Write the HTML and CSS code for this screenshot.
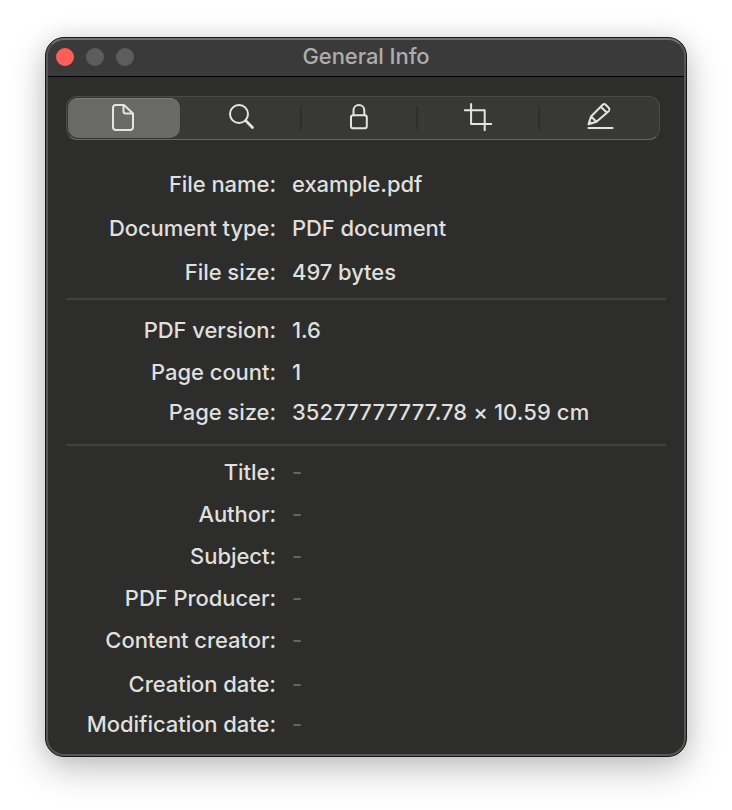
FILE: index.html
```html
<!DOCTYPE html>
<html lang="en">
<head>
<meta charset="utf-8">
<title>General Info</title>
<link rel="stylesheet" href="styles.css">
</head>
<body>
<main class="window">
  <header class="titlebar">
    <div class="lights"><span class="light close"></span><span class="light"></span><span class="light"></span></div>
    <h1 class="title">General Info</h1>
  </header>
  <nav class="tabs">
    <button class="tab selected" aria-label="General"><svg width="28" height="32" viewBox="0 0 28 32"><path d="M7 3h8l9 8.500V25a3 3 0 0 1-3 3H7a3 3 0 0 1-3-3V6a3 3 0 0 1 3-3zM14.500 3.500v6a2 2 0 0 0 2 2h7"/></svg></button>
    <button class="tab search" aria-label="Search"><svg width="32" height="32" viewBox="0 0 32 32"><circle cx="14" cy="12" r="9"/><path class="thick" d="M20.800 18.800l6.700 6.700"/></svg></button>
    <button class="tab lock" aria-label="Security"><svg width="28" height="32" viewBox="0 0 28 32"><rect x="6" y="13.300" width="15.800" height="13" rx="2"/><path d="M8.500 13.300V8.500C8.500 1.200 19.300 1.200 19.300 8.500V13.300"/></svg></button>
    <button class="tab crop" aria-label="Crop"><svg width="32" height="32" viewBox="0 0 32 32"><path d="M2.800 8.300H22.700V28.300M9.100 1.900V22H29.200"/></svg></button>
    <button class="tab edit" aria-label="Annotate"><svg width="32" height="32" viewBox="0 0 32 32"><path d="M6.500 22.200L9 14.500 20.700 2.700q1.500-1.300 3 .1l3.200 3.200q1.300 1.500 0 3L14.500 19.700zM9 14.500l5.500 5.200M18.800 4.800l5.700 5.500M7.300 19.500l2.200 1.900"/><path class="underline" d="M6.500 26h24"/></svg></button>
  </nav>
  <dl class="info first">
    <div class="row"><dt>File name:</dt><dd>example.pdf</dd></div>
    <div class="row"><dt>Document type:</dt><dd>PDF document</dd></div>
    <div class="row"><dt>File size:</dt><dd>497 bytes</dd></div>
  </dl>
  <dl class="info second">
    <div class="row"><dt>PDF version:</dt><dd>1.6</dd></div>
    <div class="row"><dt>Page count:</dt><dd>1</dd></div>
    <div class="row tight"><dt>Page size:</dt><dd class="dimensions">35277777777.78 × 10.59 cm</dd></div>
  </dl>
  <dl class="info third">
    <div class="row"><dt>Title:</dt><dd class="empty">-</dd></div>
    <div class="row"><dt>Author:</dt><dd class="empty">-</dd></div>
    <div class="row"><dt>Subject:</dt><dd class="empty">-</dd></div>
    <div class="row"><dt>PDF Producer:</dt><dd class="empty">-</dd></div>
    <div class="row"><dt>Content creator:</dt><dd class="empty">-</dd></div>
    <div class="row loose"><dt>Creation date:</dt><dd class="empty">-</dd></div>
    <div class="row tight"><dt>Modification date:</dt><dd class="empty">-</dd></div>
  </dl>
</main>
</body>
</html>
```
FILE: styles.css
```css
* { box-sizing: border-box; }
body {
  margin: 0;
  padding: 37px 45px 53px;
  background: #fff;
  font-family: Inter, "Liberation Sans", sans-serif;
  overflow: hidden;
}
.window {
  width: 642px;
  height: 720px;
  border: 1px solid #171717;
  border-radius: 19px;
  background: #2d2d2b;
  overflow: hidden;
  position: relative;
  box-shadow: 0 12px 36px rgba(0, 0, 0, .24), 0 0 22px rgba(0, 0, 0, .08);
}
.window::after {
  content: "";
  position: absolute;
  inset: 0;
  border: 2px solid #575756;
  border-top-color: #707070;
  border-radius: 18px;
  pointer-events: none;
}
.titlebar {
  display: grid;
  grid-template-columns: 90px 1fr 90px;
  align-items: center;
  height: 39px;
  background: #3a3a3a;
  border-bottom: 1px solid #000;
}
.lights { display: flex; gap: 12px; padding-left: 10px; }
.light { width: 18px; height: 18px; border-radius: 50%; background: #5d5d5d; }
.close { background: #ff5f57; }
.title {
  margin: 0;
  padding-bottom: 2px;
  text-align: center;
  font-size: 22px;
  line-height: 36px;
  font-weight: 500;
  letter-spacing: -.08px;
  color: #adadad;
}
.tabs {
  display: grid;
  grid-template-columns: 114px 120px 116px 122px 118px;
  width: 594px;
  height: 44px;
  margin: 19px 0 0 20px;
  border: 1px solid #4a4a49;
  border-bottom: 1px solid #666665;
  border-radius: 11px;
  background: #383836;
}
.tab {
  position: relative;
  display: flex;
  align-items: center;
  justify-content: center;
  padding: 0;
  border: 0;
  background: none;
  color: #e4e4e3;
}
.tab.selected {
  width: 112px;
  height: 40px;
  margin: 1px;
  border-radius: 10px;
  background: #696968;
  box-shadow: inset 0 1px #7c7c7b, 0 0 1px #222;
}
.tab + .tab + .tab::before {
  content: "";
  position: absolute;
  left: -1px;
  top: 9px;
  width: 2px;
  height: 24px;
  background: #2e2e2d;
}
.tab svg { fill: none; stroke: currentColor; stroke-width: 2; stroke-linecap: round; stroke-linejoin: round; display: block; }
.tab .thick { stroke-width: 2.8; }
.tab .underline { stroke-width: 2.2; }
.tab.selected svg { margin-left: -2px; }
.info { margin: 0 20px; }
.first { padding: 24px 0 6px; border-bottom: 2px solid #424241; }
.second { padding: 10px 0 12px; border-bottom: 2px solid #424241; }
.third { padding-top: 6px; }
.row {
  display: grid;
  grid-template-columns: 210px 1fr;
  column-gap: 16px;
  height: 40px;
  line-height: 40px;
  font-size: 22px;
  font-weight: 500;
  color: #dfdfde;
  letter-spacing: -.06px;
  white-space: nowrap;
}
.row + .row { margin-top: 2px; }
.first .row + .row, .row + .row.loose { margin-top: 4px; }
.row + .row.tight { margin-top: 0; }
dt { text-align: right; }
dd { margin: 0; }
.dimensions { letter-spacing: .08px; }
.empty { color: #666665; }
```
